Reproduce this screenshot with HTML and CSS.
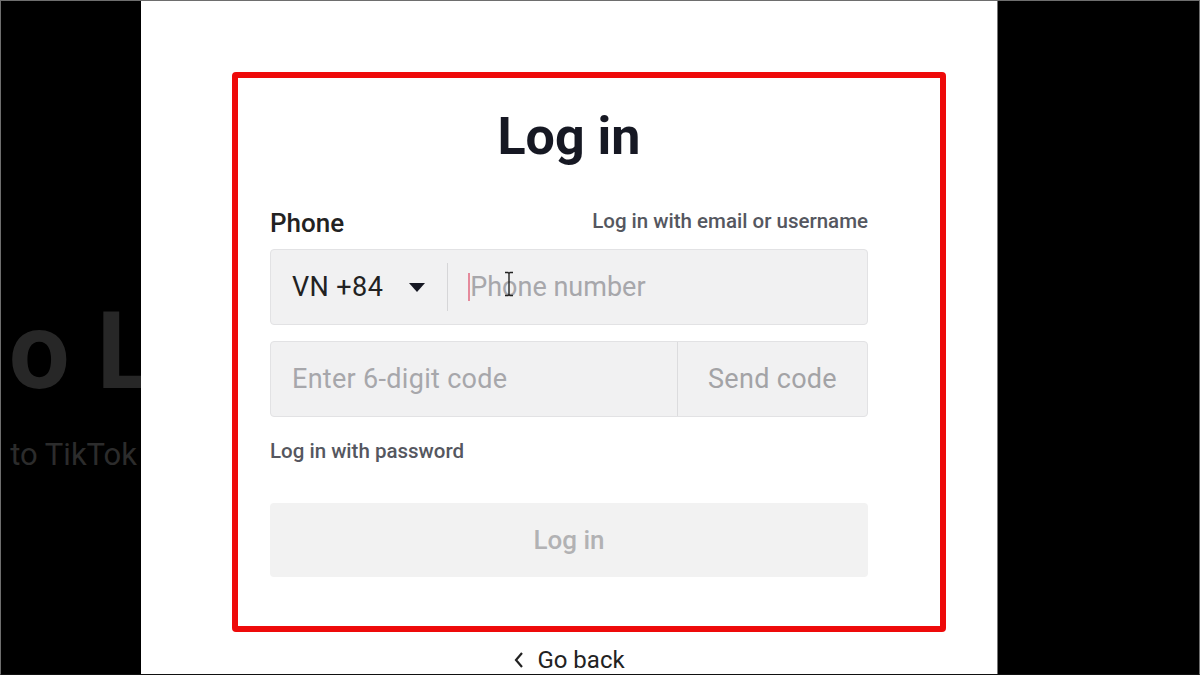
FILE: index.html
```html
<!DOCTYPE html>
<html lang="en">
<head>
    <meta charset="UTF-8">
    <meta name="viewport" content="width=device-width, initial-scale=1.0">
    <title>Log in</title>
    <link rel="stylesheet" href="styles.css">
</head>
<body>
    <div class="screen">
        <aside class="backdrop-left">
            <div class="hero-big">o L</div>
            <div class="hero-small">to TikTok</div>
        </aside>

        <section class="modal">
            <div class="highlight">
                <h1 class="login-title">Log in</h1>

                <div class="label-row">
                    <span class="field-label">Phone</span>
                    <a href="#" class="link-alt">Log in with email or username</a>
                </div>

                <div class="field phone-field">
                    <div class="country">
                        <span>VN +84</span>
                        <span class="caret-down"></span>
                    </div>
                    <span class="divider"></span>
                    <span class="text-caret"></span>
                    <span class="placeholder">Phone number</span>
                    <svg class="ibeam" width="10" height="26" viewBox="0 0 10 26">
                        <path d="M1 1.5h3l1 1 1-1h3M5 2.5v21M1 24.5h3l1-1 1 1h3" fill="none" stroke="#222" stroke-width="1.4"/>
                    </svg>
                </div>

                <div class="field code-field">
                    <span class="placeholder code-input">Enter 6-digit code</span>
                    <span class="send-code">Send code</span>
                </div>

                <a href="#" class="link-password">Log in with password</a>

                <button class="login-btn" disabled>Log in</button>
            </div>

            <a href="#" class="go-back">
                <svg width="12" height="18" viewBox="0 0 12 18">
                    <path d="M9 2L3 9l6 7" fill="none" stroke="#222" stroke-width="2.2"/>
                </svg>
                <span>Go back</span>
            </a>
        </section>

        <aside class="backdrop-right"></aside>
    </div>
</body>
</html>
```

FILE: styles.css
```css
* {
    margin: 0;
    padding: 0;
    box-sizing: border-box;
}

body {
    font-family: Roboto, 'Liberation Sans', Arial, sans-serif;
    background: #000;
    width: 1200px;
    height: 675px;
    overflow: hidden;
}

.screen {
    display: flex;
    width: 1200px;
    height: 675px;
    border: 1px solid #6e6e6e;
    border-bottom-color: #111;
    background: #000;
    overflow: hidden;
}

.backdrop-left {
    width: 140px;
    flex-shrink: 0;
    display: flex;
    flex-direction: column;
    align-items: flex-end;
    padding-top: 296px;
    overflow: hidden;
}

.hero-big {
    font-size: 108px;
    font-weight: 700;
    line-height: 1;
    color: #272727;
    white-space: nowrap;
    margin-right: -14px;
}

.hero-small {
    font-size: 31px;
    line-height: 1.2;
    color: #2c2c2c;
    white-space: nowrap;
    margin-top: 31px;
    margin-right: 4px;
}

.modal {
    width: 856px;
    flex-shrink: 0;
    background: #fff;
    padding-top: 71px;
    padding-left: 91px;
}

.backdrop-right {
    flex: 1;
    background: #000;
    border-left: 1px solid #777;
}

.highlight {
    width: 714px;
    border: 6px solid #ee0a0a;
    border-radius: 4px;
    padding: 28px 72px 49px 32px;
}

.login-title {
    font-size: 52px;
    font-weight: 700;
    line-height: 62px;
    color: #161823;
    text-align: center;
}

.label-row {
    display: flex;
    justify-content: space-between;
    align-items: flex-end;
    margin-top: 40px;
    height: 30px;
}

.field-label {
    font-size: 26px;
    font-weight: 500;
    line-height: 30px;
    color: #222;
}

.link-alt,
.link-password {
    font-size: 20.5px;
    font-weight: 500;
    line-height: 24px;
    color: #555760;
    text-decoration: none;
}

.link-alt {
    padding-bottom: 5px;
}

.field {
    display: flex;
    align-items: center;
    height: 76px;
    background: #f1f1f2;
    border: 1px solid #e2e2e4;
    border-radius: 4px;
    font-size: 27px;
}

.phone-field {
    position: relative;
    margin-top: 11px;
}

.country {
    display: flex;
    align-items: center;
    gap: 26px;
    padding: 0 22px 0 21px;
    color: #222;
    letter-spacing: 0.4px;
}

.caret-down {
    width: 0;
    height: 0;
    border-left: 8px solid transparent;
    border-right: 8px solid transparent;
    border-top: 9px solid #161823;
}

.divider {
    width: 1px;
    height: 48px;
    background: #d6d6d8;
}

.text-caret {
    width: 2px;
    height: 28px;
    background: #e58a9c;
    margin-left: 20px;
}

.placeholder {
    color: #a7a7ab;
}

.ibeam {
    position: absolute;
    left: 233px;
    top: 21px;
}

.code-field {
    margin-top: 16px;
}

.code-input {
    flex: 1;
    padding-left: 21px;
    height: 100%;
    display: flex;
    align-items: center;
    border-right: 1px solid #dcdcde;
    letter-spacing: 0.3px;
}

.send-code {
    width: 189px;
    text-align: center;
    color: #a3a3a6;
    letter-spacing: 0.3px;
}

.link-password {
    display: block;
    width: fit-content;
    margin-top: 22px;
}

.login-btn {
    display: block;
    width: 100%;
    height: 74px;
    margin-top: 40px;
    border: none;
    border-radius: 4px;
    background: #f2f2f2;
    color: #b2b2b4;
    font-family: inherit;
    font-size: 26px;
    font-weight: 500;
}

.go-back {
    display: flex;
    align-items: center;
    justify-content: center;
    gap: 12px;
    width: 714px;
    margin-top: 14px;
    padding-right: 40px;
    font-size: 24px;
    line-height: 28px;
    color: #222;
    text-decoration: none;
}
```
